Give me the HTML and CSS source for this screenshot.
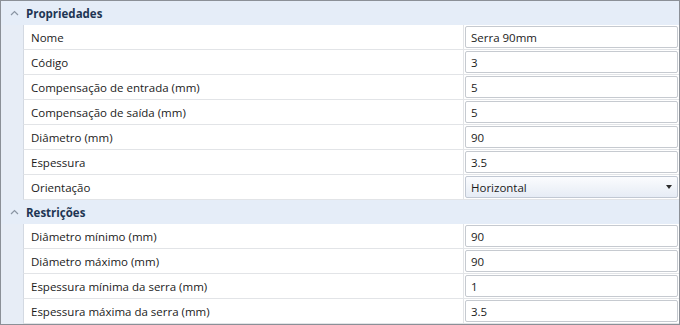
FILE: index.html
```html
<!DOCTYPE html>
<html>
<head>
  <title>Propriedades</title>
  <link rel="stylesheet" href="styles.css">
</head>
<body>
  <div class="grid">
    <div class="group-header">
      <span class="chevron"><svg width="9" height="6" viewBox="0 0 9 6"><path d="M1 5 L4.5 1.5 L8 5" fill="none" stroke="#8a95a3" stroke-width="1.2"/></svg></span>
      <span class="group-title">Propriedades</span>
    </div>
    <div class="row"><div class="gutter"></div><div class="label">Nome</div><div class="value"><div class="box">Serra 90mm</div></div></div>
    <div class="row"><div class="gutter"></div><div class="label">Código</div><div class="value"><div class="box">3</div></div></div>
    <div class="row"><div class="gutter"></div><div class="label">Compensação de entrada (mm)</div><div class="value"><div class="box">5</div></div></div>
    <div class="row"><div class="gutter"></div><div class="label">Compensação de saída (mm)</div><div class="value"><div class="box">5</div></div></div>
    <div class="row"><div class="gutter"></div><div class="label">Diâmetro (mm)</div><div class="value"><div class="box">90</div></div></div>
    <div class="row"><div class="gutter"></div><div class="label">Espessura</div><div class="value"><div class="box">3.5</div></div></div>
    <div class="row"><div class="gutter"></div><div class="label">Orientação</div><div class="value"><div class="box combo"><span>Horizontal</span><span class="arrow"></span></div></div></div>
    <div class="group-header">
      <span class="chevron"><svg width="9" height="6" viewBox="0 0 9 6"><path d="M1 5 L4.5 1.5 L8 5" fill="none" stroke="#8a95a3" stroke-width="1.2"/></svg></span>
      <span class="group-title">Restrições</span>
    </div>
    <div class="row"><div class="gutter"></div><div class="label">Diâmetro mínimo (mm)</div><div class="value"><div class="box">90</div></div></div>
    <div class="row"><div class="gutter"></div><div class="label">Diâmetro máximo (mm)</div><div class="value"><div class="box">90</div></div></div>
    <div class="row"><div class="gutter"></div><div class="label">Espessura mínima da serra (mm)</div><div class="value"><div class="box">1</div></div></div>
    <div class="row"><div class="gutter"></div><div class="label">Espessura máxima da serra (mm)</div><div class="value"><div class="box">3.5</div></div></div>
  </div>
</body>
</html>
```
FILE: styles.css
```css
body {
  margin: 0;
  font-family: "Open Sans", "Noto Sans", sans-serif;
  font-size: 11.5px;
  color: #1b1b1b;
  background: #ffffff;
}

.grid {
  width: 680px;
  height: 325px;
  box-sizing: border-box;
  border: 1px solid #8b9097;
  overflow: hidden;
  background: #ffffff;
}

.group-header {
  height: 24px;
  display: flex;
  align-items: center;
  background: #e5edf8;
}

.chevron {
  width: 25px;
  display: flex;
  justify-content: center;
  padding-left: 2px;
  box-sizing: border-box;
}

.group-title {
  font-weight: 700;
  color: #1e3553;
  font-size: 11.5px;
}

.row {
  height: 25px;
  display: grid;
  grid-template-columns: 22px 440px 1fr;
}

.gutter {
  background: #e7edf6;
}

.label {
  border-left: 1px solid #d3d9e2;
  border-bottom: 1px solid #e2e4e7;
  padding-left: 7px;
  display: flex;
  align-items: center;
}

.value {
  border-left: 1px solid #e2e4e7;
  border-bottom: 1px solid #e2e4e7;
  padding: 1px 1px 1px 1px;
  display: flex;
}

.box {
  flex: 1;
  border: 1px solid #c6cad0;
  border-radius: 2px;
  padding-left: 5px;
  display: flex;
  align-items: center;
  background: #ffffff;
}

.combo {
  justify-content: space-between;
  background: linear-gradient(#fbfcfe, #e6ecf5);
  border-color: #c1c8d3;
}

.arrow {
  width: 0;
  height: 0;
  border-left: 3.5px solid transparent;
  border-right: 3.5px solid transparent;
  border-top: 4px solid #2b2b2b;
  margin-right: 5px;
}
```
